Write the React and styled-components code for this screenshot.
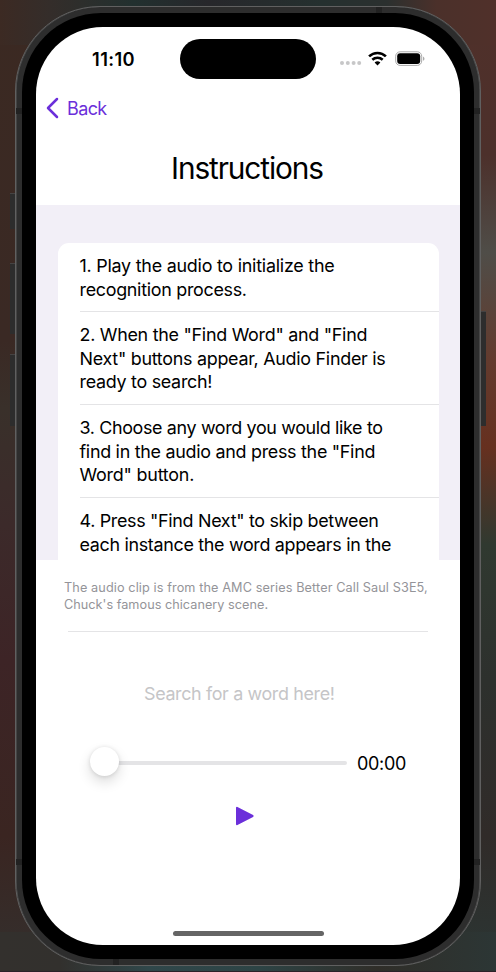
import React from "react";
import styled, { createGlobalStyle } from "styled-components";

const Global = createGlobalStyle`
  * { box-sizing: border-box; }
  html, body { margin: 0; padding: 0; overflow: hidden; }
`;

const Wallpaper = styled.main`
  position: relative;
  width: 496px;
  height: 972px;
  padding: 6px 15px 6px 15px;
  overflow: hidden;
  font-family: Inter, "Liberation Sans", sans-serif;
  border-bottom: 1px solid #2b2229;
  background:
    linear-gradient(90deg, #33302d 0%, #32302d 12%, #30474a 30%, #2d4445 52%, #302e29 76%, #2c3635 100%) 0 932px / 496px 40px no-repeat,
    linear-gradient(90deg, #3c2a23 0%, #342d2a 10%, #22302f 27%, #27272b 42%, #25302f 65%, #2b302f 78%, #4b302a 88%, #50302a 100%) 0 0 / 496px 45px no-repeat,
    linear-gradient(180deg, #3b2922 0%, #3a2924 35%, #39302a 42%, #3c2a2a 54%, #3d2426 68%, #3a2521 86%, #33302e 100%) 0 0 / 248px 972px no-repeat,
    linear-gradient(180deg, #50302a 0%, #4c302b 16%, #4f4d48 26%, #633b2e 37%, #66301f 46%, #303930 56%, #2d302d 70%, #302b29 86%, #2b3634 100%) 248px 0 / 248px 972px no-repeat;
`;

const SideButton = styled.i`
  position: absolute;
  left: ${(p) => p.$x}px;
  top: ${(p) => p.$y}px;
  width: 5.5px;
  height: ${(p) => p.$h}px;
  background: #2d2d2d;
  border-top: 1px solid #454343;
`;

const Frame = styled.section`
  position: relative;
  width: 466px;
  height: 960px;
  padding: 6px;
  border: 1px solid #606060;
  border-radius: 85px;
  background: #2d2d2d;
  box-shadow: inset 0.7px 0 0 #505050, inset -0.7px 0 0 #505050;
`;

const Antenna = styled.i`
  position: absolute;
  left: ${(p) => p.$x}px;
  top: ${(p) => p.$y}px;
  width: 6px;
  height: 6px;
  background: #222;
`;

const Bezel = styled.div`
  height: 946px;
  padding: 14px;
  border-radius: 79px;
  background: #000;
`;

const Screen = styled.div`
  display: flex;
  flex-direction: column;
  width: 424px;
  height: 918px;
  overflow: hidden;
  background: #fff;
  border-radius: 67px;
  color: #000;
`;

const StatusBar = styled.div`
  display: grid;
  grid-template-columns: 144px 136px 1fr;
  align-items: center;
  height: 64px;
`;

const Clock = styled.div`
  padding-left: 56px;
  font-size: 18.3px;
  font-weight: 600;
  letter-spacing: 0.4px;
`;

const Island = styled.div`
  height: 40px;
  border-radius: 20px;
  background: #000;
`;

const StatusIcons = styled.svg`
  display: block;
  width: 90px;
  height: 24px;
  margin-left: 23px;
`;

const NavBar = styled.button`
  display: flex;
  align-items: center;
  gap: 8.5px;
  height: 34px;
  margin-bottom: 2px;
  padding: 0 0 0 9.5px;
  border: 0;
  background: none;
  color: #6b2fda;
  font: 400 18px Inter, sans-serif;
  svg { width: 13px; height: 22px; }
`;

const Line = styled.span`
  display: block;
  white-space: nowrap;
  letter-spacing: ${(p) => p.$track || 0}px;
`;

const Title = styled.h1`
  height: 78px;
  margin: 0;
  padding: 21px 0 0 135px;
  font-size: 29.8px;
  font-weight: 400;
  line-height: 40px;
`;

const ListArea = styled.div`
  height: 355px;
  flex: none;
  padding: 37.5px 21.5px 0;
  overflow: hidden;
  background: #f2eff7;
`;

const Card = styled.ol`
  height: 340px;
  margin: 0;
  padding: 0 0 0 22px;
  list-style: none;
  background: #fff;
  border-radius: 11px;
`;

const Item = styled.li`
  height: ${(p) => p.$h}px;
  padding-top: 11.5px;
  border-bottom: 1px solid #e4e4e6;
  font-size: 17.9px;
  line-height: 23.7px;
`;

const Caption = styled.div`
  height: 71px;
  flex: none;
  margin: 0 32px 0 28px;
  padding: 19px 0 0;
  color: #949499;
  font-size: 12.7px;
  line-height: 17.2px;
`;

const Divider = styled.hr`
  flex: none;
  width: 360px;
  height: 1px;
  margin: 0 32px;
  border: 0;
  background: #e4e4e6;
`;

const Search = styled.div`
  height: 100px;
  padding: 49px 0 0 108px;
  color: #c5c5c7;
  font-size: 17.9px;
  line-height: 26px;
`;

const Player = styled.div`
  display: flex;
  align-items: center;
  height: 61px;
  padding-left: 54px;
`;

const Track = styled.div`
  display: flex;
  align-items: center;
  width: 257px;
  height: 4px;
  margin-right: 10px;
  border-radius: 2px;
  background: #e4e4e6;
`;

const Thumb = styled.div`
  width: 29px;
  height: 29px;
  flex: none;
  margin-top: -2px;
  border-radius: 50%;
  background: #fff;
  box-shadow: 0 6px 13px rgba(0, 0, 0, .14), 0 0.5px 4px rgba(0, 0, 0, .12);
`;

const Time = styled.div`
  padding-top: 1px;
  font-size: 18px;
`;

const PlayIcon = styled.svg`
  display: block;
  width: 20px;
  height: 22px;
  margin: 11.5px 0 0 199px;
`;

const HomeBar = styled.div`
  width: 151px;
  height: 5px;
  flex: none;
  margin: auto 0 9px 137px;
  border-radius: 3px;
  background: #656565;
`;

const steps = [
  { h: 69, lines: [["1. Play the audio to initialize the", -0.235], ["recognition process.", -0.29]] },
  { h: 93, lines: [['2. When the "Find Word" and "Find', -0.27], ['Next" buttons appear, Audio Finder is', -0.27], ["ready to search!", -0.28]] },
  { h: 93, lines: [["3. Choose any word you would like to", -0.35], ['find in the audio and press the "Find', -0.28], ['Word" button.', -0.2]] },
  { h: 93, lines: [['4. Press "Find Next" to skip between', -0.31], ["each instance the word appears in the", -0.31]] },
];

export default function App() {
  return (
    <Wallpaper>
      <Global />
      <SideButton $x={10} $y={193} $h={36} />
      <SideButton $x={10} $y={263} $h={71} />
      <SideButton $x={10} $y={354} $h={72} />
      <SideButton $x={480} $y={311} $h={115} />
      <Frame>
        <Antenna $x={0} $y={101} />
        <Antenna $x={458} $y={101} />
        <Antenna $x={0} $y={852} />
        <Antenna $x={458} $y={852} />
        <Antenna $x={360} $y={0} />
        <Antenna $x={97} $y={952} />
        <Bezel>
          <Screen>
            <StatusBar>
              <Clock>11:10</Clock>
              <Island />
              <StatusIcons viewBox="0 0 90 24">
                <g fill="#c7c7c8">
                  <circle cx="3" cy="16" r="2" /><circle cx="8.8" cy="16" r="2" />
                  <circle cx="14.6" cy="16" r="2" /><circle cx="20.2" cy="16" r="2" />
                </g>
                <g fill="none" stroke="#000" strokeWidth="2.6">
                  <path d="M30.6 9.400a12 12 0 0 1 16.800 0" transform="translate(-.5 0)" />
                  <path d="M33.3 12.800a7.700 7.700 0 0 1 10.400 0" />
                </g>
                <path d="M35.600 15.600a4.200 4.200 0 0 1 5.800 0L38.500 18.400z" />
                <rect x="56.7" y="4.800" width="26" height="13.600" rx="4.4" fill="none" stroke="#aaa" />
                <rect x="58.2" y="6.300" width="23" height="10.600" rx="3" />
                <path d="M84 9.400c2 .8 2 3.600 0 4.400z" fill="#aaa" />
              </StatusIcons>
            </StatusBar>
            <NavBar>
              <svg viewBox="0 0 13 22"><path d="M11 2 2 11l9 9" fill="none" stroke="currentColor" strokeWidth="2.5" strokeLinecap="round" strokeLinejoin="round" /></svg>
              <Line $track={-0.6}>Back</Line>
            </NavBar>
            <Title><Line $track={-1.1}>Instructions</Line></Title>
            <ListArea>
              <Card>
                {steps.map((s) => (
                  <Item key={s.lines[0][0]} $h={s.h}>
                    {s.lines.map(([text, track]) => <Line key={text} $track={track}>{text}</Line>)}
                  </Item>
                ))}
              </Card>
            </ListArea>
            <Caption>
              <Line $track={0.1}>The audio clip is from the AMC series Better Call Saul S3E5,</Line>
              <Line $track={0.02}>Chuck's famous chicanery scene.</Line>
            </Caption>
            <Divider />
            <Search><Line $track={-0.35}>Search for a word here!</Line></Search>
            <Player>
              <Track><Thumb /></Track>
              <Time><Line $track={-0.3}>00:00</Line></Time>
            </Player>
            <PlayIcon viewBox="0 0 20 22"><path d="M2 2.800v16.400L17.600 11z" fill="#6b2fda" stroke="#6b2fda" strokeWidth="2" strokeLinejoin="round" /></PlayIcon>
            <HomeBar />
          </Screen>
        </Bezel>
      </Frame>
    </Wallpaper>
  );
}
